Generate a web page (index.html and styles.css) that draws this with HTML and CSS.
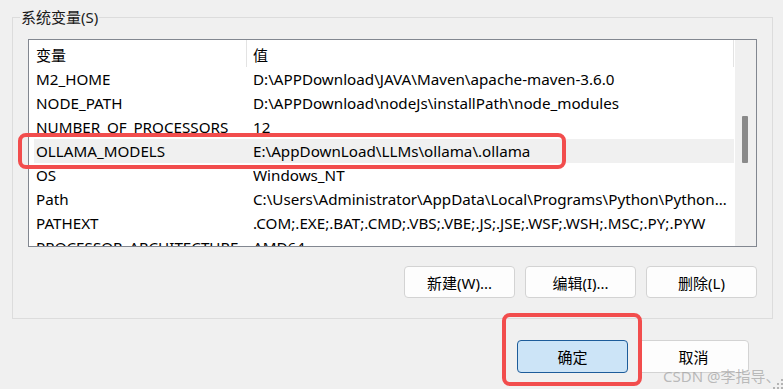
FILE: index.html
```html
<!DOCTYPE html>
<html lang="zh-CN">
<head>
    <meta charset="UTF-8">
    <meta name="viewport" content="width=device-width, initial-scale=1.0">
    <title>环境变量</title>
    <link rel="stylesheet" href="styles.css">
</head>
<body>
    <div class="dialog">
        <fieldset class="group">
            <legend>系统变量(S)</legend>
            <div class="list">
                <div class="table">
                    <div class="head">
                        <span class="hcell">变量</span>
                        <span class="hcell hcell-value">值</span>
                    </div>
                    <div class="rows">
                        <div class="row"><span class="name">M2_HOME</span><span class="value">D:\APPDownload\JAVA\Maven\apache-maven-3.6.0</span></div>
                        <div class="row"><span class="name">NODE_PATH</span><span class="value">D:\APPDownload\nodeJs\installPath\node_modules</span></div>
                        <div class="row"><span class="name">NUMBER_OF_PROCESSORS</span><span class="value">12</span></div>
                        <div class="row selected"><span class="name">OLLAMA_MODELS</span><span class="value">E:\AppDownLoad\LLMs\ollama\.ollama</span></div>
                        <div class="row"><span class="name">OS</span><span class="value">Windows_NT</span></div>
                        <div class="row"><span class="name">Path</span><span class="value">C:\Users\Administrator\AppData\Local\Programs\Python\Python312\Scripts\</span></div>
                        <div class="row"><span class="name">PATHEXT</span><span class="value">.COM;.EXE;.BAT;.CMD;.VBS;.VBE;.JS;.JSE;.WSF;.WSH;.MSC;.PY;.PYW</span></div>
                        <div class="row"><span class="name">PROCESSOR_ARCHITECTURE</span><span class="value">AMD64</span></div>
                    </div>
                </div>
                <div class="scrollbar">
                    <div class="thumb"></div>
                </div>
            </div>
            <div class="actions">
                <button class="btn">新建(W)...</button>
                <button class="btn">编辑(I)...</button>
                <button class="btn">删除(L)</button>
            </div>
        </fieldset>

        <div class="footer">
            <button class="btn btn-primary">确定</button>
            <button class="btn">取消</button>
        </div>

        <!-- red annotation frames -->
        <div class="mark mark-row"></div>
        <div class="mark mark-ok"></div>

        <div class="watermark">CSDN @李指导、</div>
        <svg class="grip" width="10" height="10" viewBox="0 0 10 10">
            <rect x="8" y="0" width="2" height="2" fill="#b4b4b4"/>
            <rect x="4" y="4" width="2" height="2" fill="#b4b4b4"/>
            <rect x="8" y="4" width="2" height="2" fill="#b4b4b4"/>
            <rect x="0" y="8" width="2" height="2" fill="#b4b4b4"/>
            <rect x="4" y="8" width="2" height="2" fill="#b4b4b4"/>
            <rect x="8" y="8" width="2" height="2" fill="#b4b4b4"/>
        </svg>
    </div>
</body>
</html>
```

FILE: styles.css
```css
*, *::before, *::after {
    box-sizing: border-box;
}
html, body {
    margin: 0;
    padding: 0;
}
body {
    width: 783px;
    height: 389px;
    overflow: hidden;
    background: #f0f0f0;
    color: #000;
    font-family: "Noto Sans", "Noto Sans CJK SC", sans-serif;
    font-size: 14px;
}
.dialog {
    position: relative;
    width: 783px;
    height: 389px;
    padding-top: 7px;
}

/* group box */
.group {
    margin: 0 0 0 12px;
    width: 761px;
    border: 1px solid #dcdcdc;
    padding: 0 15px 20px 15px;
    min-width: 0;
}
.group legend {
    margin-left: -8px;
    padding: 0 1px;
    font-size: 15px;
    line-height: 20px;
    color: #1a1a1a;
}

/* list view */
.list {
    margin-top: 12px;
    height: 208px;
    display: flex;
    border: 1px solid #828790;
    background: #fff;
}
.table {
    width: 706px;
    display: flex;
    flex-direction: column;
}
.head {
    height: 27px;
    display: grid;
    grid-template-columns: 213px 1fr;
    padding: 0 1px 0 5px;
}
.hcell {
    padding: 3px 0 0 2px;
    line-height: 24px;
    font-size: 15px;
    border-right: 1px solid #e3e3e3;
}
.hcell-value {
    padding-left: 6px;
}
.rows {
    flex: 1;
    overflow: hidden;
    padding-left: 5px;
    padding-right: 1px;
}
.row {
    height: 24px;
    line-height: 24px;
    display: grid;
    grid-template-columns: 219px 1fr;
    font-size: 15.2px;
}
.row.selected {
    background: #f0f0f0;
}
.row .name {
    padding-left: 2px;
    white-space: nowrap;
    overflow: hidden;
}
.row .value {
    padding-right: 6px;
    white-space: nowrap;
    overflow: hidden;
    text-overflow: ellipsis;
}
.scrollbar {
    width: 21px;
    background: #f0f0f0;
    padding: 76px 0 0 7px;
}
.thumb {
    width: 6px;
    height: 47px;
    background: #8a8a8a;
    border-radius: 1px;
}

/* buttons */
.actions {
    margin-top: 19px;
    display: flex;
    justify-content: flex-end;
    gap: 10px;
}
.btn {
    width: 111px;
    height: 32px;
    font-family: inherit;
    font-size: 15px;
    color: #000;
    background: #fdfdfd;
    border: 1px solid #d3d3d3;
    border-radius: 4px;
    padding: 0;
}
.footer {
    margin-top: 21px;
    display: flex;
    justify-content: flex-end;
    gap: 10px;
    padding-right: 34px;
}
.footer .btn {
    height: 33px;
}
.btn-primary {
    background: #cce4f7;
    border-color: #1d5c9a;
}

/* annotations */
.mark {
    position: absolute;
    border: 4px solid #f24d4d;
    border-radius: 8px;
}
.mark-row {
    left: 18px;
    top: 133px;
    width: 548px;
    height: 36px;
}
.mark-ok {
    left: 502px;
    top: 313px;
    width: 140px;
    height: 73px;
}
.watermark {
    position: absolute;
    left: 663px;
    top: 366px;
    font-size: 15px;
    line-height: 20px;
    color: rgba(160, 160, 160, 0.7);
    white-space: nowrap;
}
.grip {
    position: absolute;
    right: 0;
    bottom: 0;
}
```
